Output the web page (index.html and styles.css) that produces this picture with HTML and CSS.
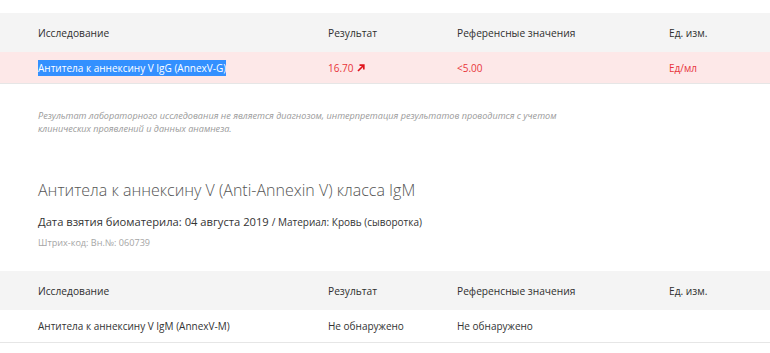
FILE: index.html
```html
<!DOCTYPE html>
<html lang="ru">
<head>
    <meta charset="UTF-8">
    <meta name="viewport" content="width=device-width, initial-scale=1.0">
    <title>Результаты исследований</title>
    <link rel="stylesheet" href="styles.css">
</head>
<body>
    <div class="results">
        <!-- Таблица: IgG -->
        <div class="table">
            <div class="row head">
                <div>Исследование</div>
                <div>Результат</div>
                <div>Референсные значения</div>
                <div>Ед. изм.</div>
            </div>
            <div class="row high">
                <div><span class="selected">Антитела к аннексину V IgG (AnnexV-G)</span></div>
                <div>16.70 <svg class="arrow" width="8" height="8" viewBox="0 0 8 8"><path d="M1 7L6.5 1.5M2.5 1.2H6.8V5.5" fill="none" stroke="#e0141c" stroke-width="1.7"/></svg></div>
                <div>&lt;5.00</div>
                <div>Ед/мл</div>
            </div>
        </div>

        <p class="note">
            Результат лабораторного исследования не является диагнозом, интерпретация результатов проводится с учетом<br>
            клинических проявлений и данных анамнеза.
        </p>

        <!-- Блок: IgM -->
        <h2 class="test-title">Антитела к аннексину V (Anti-Annexin V) класса IgM</h2>
        <div class="test-date">Дата взятия биоматерила: 04 августа 2019 <span class="material">/ Материал: Кровь (сыворотка)</span></div>
        <div class="barcode">Штрих-код: Вн.№: 060739</div>

        <div class="table">
            <div class="row head">
                <div>Исследование</div>
                <div>Результат</div>
                <div>Референсные значения</div>
                <div>Ед. изм.</div>
            </div>
            <div class="row">
                <div>Антитела к аннексину V IgM (AnnexV-M)</div>
                <div>Не обнаружено</div>
                <div>Не обнаружено</div>
                <div></div>
            </div>
        </div>
    </div>
</body>
</html>
```

FILE: styles.css
```css
body {
    font-family: "Open Sans", "Liberation Sans", sans-serif;
    background-color: #ffffff;
    color: #333333;
    margin: 0;
    padding: 0;
}
.results {
    padding-top: 13px;
}
.table {
    width: 100%;
}
.row {
    display: grid;
    grid-template-columns: 290px 129px 212px 1fr;
    align-items: center;
    padding-left: 38px;
    height: 32px;
    font-size: 10px;
    border-bottom: 1px solid #e6e6e6;
}
.row.head {
    height: 39px;
    background-color: #f4f4f4;
    border-bottom: none;
    font-size: 10.2px;
    color: #2f2f2f;
}
.row.high {
    height: 31px;
    background-color: #fde8e8;
    color: #e8343a;
}
.selected {
    background-color: #3390ff;
    color: #ffffff;
    padding: 1px 0;
}
.arrow {
    margin-left: 1px;
    vertical-align: 0;
}
.note {
    margin: 25px 0 0 38px;
    font-size: 9.1px;
    font-style: italic;
    line-height: 13px;
    color: #9a9a9a;
}
.test-title {
    margin: 44px 0 0 38px;
    font-size: 16px;
    font-weight: 300;
    color: #555555;
    line-height: 22px;
}
.test-date {
    margin: 13px 0 0 38px;
    font-size: 11.2px;
    line-height: 16px;
    color: #333333;
}
.material {
    font-size: 10px;
}
.barcode {
    margin: 7px 0 22px 38px;
    font-size: 9.1px;
    line-height: 12px;
    color: #a5a5a5;
}
```
